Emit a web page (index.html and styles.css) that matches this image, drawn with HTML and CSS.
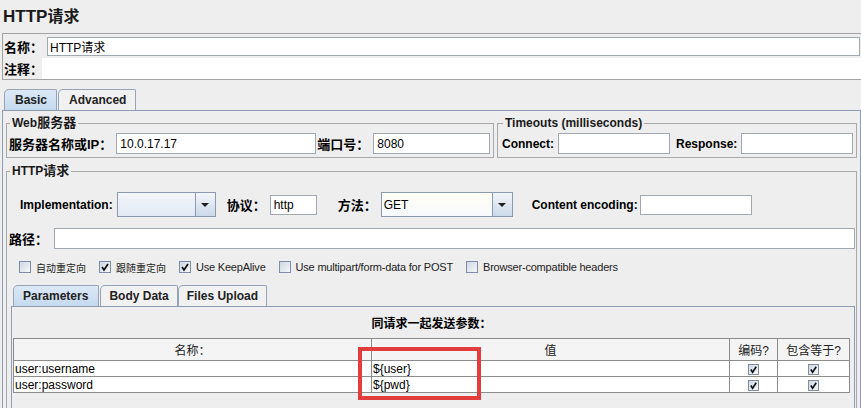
FILE: index.html
```html
<!DOCTYPE html>
<html lang="zh-CN">
<head>
    <meta charset="UTF-8">
    <title>HTTP请求</title>
    <link rel="stylesheet" href="styles.css">
</head>
<body>
    <h1 class="title">HTTP<span class="cn-title">请求</span></h1>

    <div class="name-box">
        <div class="name-row">
            <span class="lbl cn">名称：</span>
            <input class="field name-field" type="text" value="HTTP请求">
        </div>
        <div class="name-row">
            <span class="lbl cn">注释：</span>
            <div class="comment"></div>
        </div>
    </div>

    <div class="tabs">
        <div class="tab active">Basic</div>
        <div class="tab">Advanced</div>
    </div>
    <div class="tab-pane">
        <div class="server-row">
            <fieldset class="group web">
                <legend>Web<span class="cn">服务器</span></legend>
                <div class="line">
                    <span class="lbl cn">服务器名称或IP：</span>
                    <input class="field host" type="text" value="10.0.17.17">
                    <span class="lbl cn port-lbl">端口号：</span>
                    <input class="field port" type="text" value="8080">
                </div>
            </fieldset>
            <fieldset class="group timeouts">
                <legend>Timeouts (milliseconds)</legend>
                <div class="line">
                    <span class="lbl">Connect:</span>
                    <input class="field connect" type="text">
                    <span class="lbl resp-lbl">Response:</span>
                    <input class="field response" type="text">
                </div>
            </fieldset>
        </div>

        <fieldset class="group http">
            <legend>HTTP<span class="cn">请求</span></legend>
            <div class="impl-row">
                <span class="lbl">Implementation:</span>
                <div class="combo impl">
                    <span class="combo-text"></span>
                    <span class="combo-btn"><svg width="8" height="4" viewBox="0 0 8 4"><path d="M0 0h8L4 4z" fill="#1e1e1e"/></svg></span>
                </div>
                <span class="lbl cn gap-s">协议：</span>
                <input class="field proto" type="text" value="http">
                <span class="lbl cn gap-l">方法：</span>
                <div class="combo method">
                    <span class="combo-text">GET</span>
                    <span class="combo-btn"><svg width="8" height="4" viewBox="0 0 8 4"><path d="M0 0h8L4 4z" fill="#1e1e1e"/></svg></span>
                </div>
                <span class="lbl gap-enc">Content encoding:</span>
                <input class="field encoding" type="text">
            </div>

            <div class="path-row">
                <span class="lbl cn path-lbl">路径：</span>
                <input class="field path" type="text">
            </div>

            <div class="check-row">
                <label class="chk"><span class="box"></span><span class="cn-sm">自动重定向</span></label>
                <label class="chk"><span class="box"><svg width="10" height="10" viewBox="0 0 10 10"><path d="M2 5l2 3 4-6" fill="none" stroke="#111" stroke-width="1.8"/></svg></span><span class="cn-sm">跟随重定向</span></label>
                <label class="chk"><span class="box"><svg width="10" height="10" viewBox="0 0 10 10"><path d="M2 5l2 3 4-6" fill="none" stroke="#111" stroke-width="1.8"/></svg></span>Use KeepAlive</label>
                <label class="chk"><span class="box"></span>Use multipart/form-data for POST</label>
                <label class="chk"><span class="box"></span>Browser-compatible headers</label>
            </div>

            <div class="sub-tabs">
                <div class="tab active">Parameters</div>
                <div class="tab">Body Data</div>
                <div class="tab">Files Upload</div>
            </div>
            <div class="sub-pane">
                <div class="caption">同请求一起发送参数：</div>
                <table class="params">
                    <colgroup>
                        <col class="c-name">
                        <col class="c-val">
                        <col class="c-enc">
                        <col>
                    </colgroup>
                    <thead>
                        <tr><th>名称：</th><th>值</th><th>编码?</th><th>包含等于?</th></tr>
                    </thead>
                    <tbody>
                        <tr>
                            <td>user:username</td>
                            <td>${user}</td>
                            <td class="mid"><span class="box sm"><svg width="9" height="9" viewBox="0 0 10 10"><path d="M2 5l2 3 4-6" fill="none" stroke="#111" stroke-width="1.8"/></svg></span></td>
                            <td class="mid"><span class="box sm"><svg width="9" height="9" viewBox="0 0 10 10"><path d="M2 5l2 3 4-6" fill="none" stroke="#111" stroke-width="1.8"/></svg></span></td>
                        </tr>
                        <tr>
                            <td>user:password</td>
                            <td>${pwd}</td>
                            <td class="mid"><span class="box sm"><svg width="9" height="9" viewBox="0 0 10 10"><path d="M2 5l2 3 4-6" fill="none" stroke="#111" stroke-width="1.8"/></svg></span></td>
                            <td class="mid"><span class="box sm"><svg width="9" height="9" viewBox="0 0 10 10"><path d="M2 5l2 3 4-6" fill="none" stroke="#111" stroke-width="1.8"/></svg></span></td>
                        </tr>
                    </tbody>
                </table>
                <div class="mark"></div>
            </div>
        </fieldset>
    </div>
</body>
</html>
```

FILE: styles.css
```css
* {
    box-sizing: border-box;
}
html, body {
    margin: 0;
    overflow: hidden;
}
body {
    width: 861px;
    height: 408px;
    background-color: #eeeeee;
    font-family: "Liberation Sans", "Noto Sans CJK SC", sans-serif;
    font-size: 12px;
    color: #000;
}
.cn {
    font-size: 13px;
}
.title {
    margin: 0;
    padding-left: 3px;
    height: 33px;
    line-height: 33px;
    font-size: 17px;
    font-weight: bold;
    color: #1a1a1a;
}
.cn-title {
    font-size: 16px;
}
.lbl {
    font-weight: bold;
    white-space: nowrap;
    margin-right: 4px;
}

/* name / comment box */
.name-box {
    margin-left: 2px;
    border: 1px solid #a3a3a3;
    border-right: none;
    padding: 1px 0 0 1px;
}
.name-row {
    display: flex;
    align-items: center;
    height: 22px;
}
.field {
    height: 21px;
    border: 1px solid #a2a8b2;
    background-color: #fff;
    font-family: "Liberation Sans", "Noto Sans CJK SC", sans-serif;
    font-size: 12px;
    padding: 0 3px;
    margin: 0;
    outline: none;
}
.name-field {
    flex: 1;
    height: 19px;
    margin-right: 1px;
    padding-left: 2px;
}
.comment {
    flex: 1;
    height: 21px;
    margin-left: -5px;
    background-color: #fff;
}

/* tabs */
.tabs, .sub-tabs {
    display: flex;
    height: 21px;
}
.tabs {
    margin: 9px 0 0 4px;
}
.tab {
    display: flex;
    align-items: center;
    height: 21px;
    padding: 0 9px 0 10px;
    margin-right: 1px;
    border: 1px solid #98a3b8;
    border-bottom: none;
    border-radius: 5px 2px 0 0;
    background-color: #f1f1f1;
    font-weight: bold;
    color: #222;
}
.tab.active {
    background: linear-gradient(#dce9f6, #c5d9ee);
}
.tab-pane {
    margin-left: 2px;
    height: 320px;
    border: 1px solid #8f9bb3;
    padding: 5px 3px 0 3px;
}

/* titled groups */
.group {
    margin: 0;
    min-width: 0;
    border: 1px solid #a9a9a9;
    padding: 0 3px 3px 2px;
}
.group legend {
    margin-left: 1px;
    padding: 0 2px;
    line-height: 14px;
    font-weight: bold;
    color: #1a1a1a;
}
.server-row {
    display: flex;
    gap: 3px;
}
.web {
    width: 488px;
}
.timeouts {
    flex: 1;
    padding-left: 4px;
}
.line {
    display: flex;
    align-items: center;
    padding-top: 3px;
}
.host {
    width: 200px;
}
.port-lbl {
    margin-left: 1px;
}
.port, .response {
    flex: 1;
    min-width: 0;
}
.connect {
    width: 112px;
}
.resp-lbl {
    margin-left: 6px;
}

.http {
    margin-top: 6px;
    padding: 0 1px 0 2px;
}
.impl-row {
    display: flex;
    align-items: center;
    height: 25px;
    margin-top: 14px;
    padding-left: 11px;
}
.gap-s {
    margin-left: 11px;
}
.gap-l {
    margin-left: 21px;
}
.gap-enc {
    margin-left: 19px;
    margin-right: 2px;
}
.combo {
    display: flex;
    height: 25px;
    border: 1px solid #8c99af;
}
.combo-text {
    flex: 1;
    display: flex;
    align-items: center;
    padding-left: 2px;
    background: linear-gradient(#f3f6fa, #e1e9f3);
}
.method .combo-text {
    background: linear-gradient(#fffff6, #f7f9fc);
}
.combo-btn {
    width: 20px;
    display: flex;
    align-items: center;
    justify-content: center;
    border-left: 1px solid #8c99af;
    background: linear-gradient(#f1f5fa, #cbd9e9);
}
.impl {
    width: 99px;
}
.method {
    width: 132px;
}
.proto {
    width: 47px;
    height: 20px;
}
.encoding {
    width: 112px;
    height: 20px;
}

.path-row {
    display: flex;
    align-items: center;
    margin-top: 11px;
}
.path-lbl {
    margin-right: 6px;
}
.path {
    flex: 1;
}

.check-row {
    display: flex;
    align-items: center;
    height: 16px;
    margin-top: 10px;
    padding-left: 10px;
    font-size: 11px;
    letter-spacing: -0.2px;
    color: #222;
}
.chk {
    display: flex;
    align-items: center;
    margin-right: 13px;
    white-space: nowrap;
}
.cn-sm {
    font-size: 10px;
    letter-spacing: 0;
}
.box {
    display: inline-flex;
    align-items: center;
    justify-content: center;
    width: 12px;
    height: 12px;
    margin-right: 5px;
    border: 1px solid #7f8ca3;
    background: linear-gradient(135deg, #cfd8e4, #f6f8fb);
}
.box.sm {
    width: 11px;
    height: 11px;
    margin: 0;
}

/* parameters */
.sub-tabs {
    margin: 10px 0 0 4px;
}
.sub-tabs .tab {
    padding: 0 8px;
    margin-right: 0;
}
.sub-tabs .tab.active {
    padding: 0 10px 0 9px;
    margin-right: 1px;
}
.sub-pane {
    position: relative;
    height: 120px;
    margin-left: 2px;
    border: 1px solid #8f9bb3;
    padding: 10px 4px 0 1px;
}
.caption {
    text-align: center;
    font-weight: bold;
    line-height: 14px;
    margin-bottom: 7px;
}
.params {
    width: 100%;
    table-layout: fixed;
    border-collapse: collapse;
    background-color: #fff;
}
.c-name, .c-val {
    width: 358px;
}
.c-enc {
    width: 48px;
}
.params th, .params td {
    border: 1px solid #8c8c8c;
    padding: 0 1px;
    white-space: nowrap;
    overflow: hidden;
}
.params th {
    height: 22px;
    font-weight: normal;
    background-color: #f4f4f4;
    color: #222;
}
.params td {
    height: 16px;
    line-height: 14px;
}
.params td.mid {
    text-align: center;
}
.params td .box {
    vertical-align: middle;
}
.mark {
    position: absolute;
    left: 346px;
    top: 40px;
    width: 123px;
    height: 53px;
    border: 4px solid #e23c3c;
}
```
